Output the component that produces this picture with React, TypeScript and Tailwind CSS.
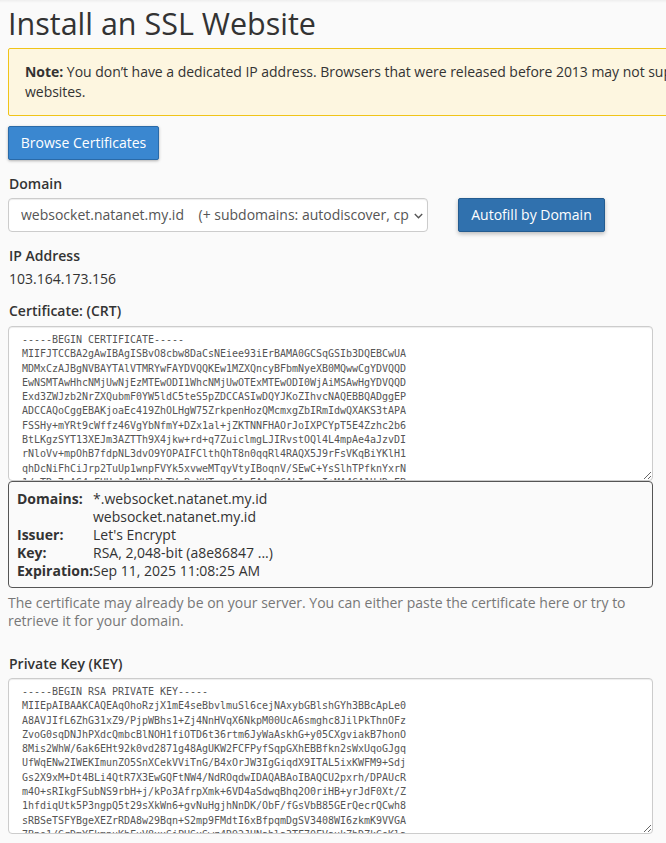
const crt = `-----BEGIN CERTIFICATE-----
MIIFJTCCBA2gAwIBAgISBvO8cbw8DaCsNEiee93iErBAMA0GCSqGSIb3DQEBCwUA
MDMxCzAJBgNVBAYTAlVTMRYwFAYDVQQKEw1MZXQncyBFbmNyeXB0MQwwCgYDVQQD
EwNSMTAwHhcNMjUwNjEzMTEwODI1WhcNMjUwOTExMTEwODI0WjAiMSAwHgYDVQQD
Exd3ZWJzb2NrZXQubmF0YW5ldC5teS5pZDCCASIwDQYJKoZIhvcNAQEBBQADggEP
ADCCAQoCggEBAKjoaEc419ZhOLHgW75ZrkpenHozQMcmxgZbIRmIdwQXAKS3tAPA
FSSHy+mYRt9cWffz46VgYbNfmY+DZx1al+jZKTNNFHAOrJoIXPCYpT5E4Zzhc2b6
BtLKgzSYT13XEJm3AZTTh9X4jkw+rd+q7ZuiclmgLJIRvstOQl4L4mpAe4aJzvDI
rNloVv+mpOhB7fdpNL3dvO9YOPAIFClthQhT8n0qqRl4RAQX5J9rFsVKqBiYKlH1
qhDcNiFhCiJrp2TuUp1wnpFVYk5xvweMTqyVtyIBoqnV/SEwC+YsSlhTPfknYxrN
1/sTRp7oAS4vFUHa10xMBkRhTVxBqXUTqpeSAvEAAaOCAkIwggI+MA4GA1UdDwEB`

const key = `-----BEGIN RSA PRIVATE KEY-----
MIIEpAIBAAKCAQEAqOhoRzjX1mE4seBbvlmuSl6cejNAxybGBlshGYh3BBcApLe0
A8AVJIfL6ZhG31xZ9/PjpWBhs1+Zj4NnHVqX6NkpM00UcA6smghc8JilPkThnOFz
ZvoG0sqDNJhPXdcQmbcBlNOH1fiOTD6t36rtm6JyWaAskhG+y05CXgviakB7honO
8Mis2WhW/6ak6EHt92k0vd2871g48AgUKW2FCFPyfSqpGXhEBBfkn2sWxUqoGJgq
UfWqENw2IWEKImunZO5SnXCekVViTnG/B4xOrJW3IgGiqdX9ITAL5ixKWFM9+Sdj
Gs2X9xM+Dt4BLi4QtR7X3EwGQFtNW4/NdROqdwIDAQABAoIBAQCU2pxrh/DPAUcR
m4O+sRIkgFSubNS9rbH+j/kPo3AfrpXmk+6VD4aSdwqBhq2O0riHB+yrJdF0Xt/Z
1hfdiqUtk5P3ngpQ5t29sXkWn6+gvNuHgjhNnDK/ObF/fGsVbB85GErQecrQCwh8
sRBSeTSFYBgeXEZrRDA8w29Bqn+S2mp9FMdtI6xBfpqmDgSV3408WI6zkmK9VVGA
7Bpo1/GrDmYFkmpuKhFuV8xxSiPHSxSwz4R92JUNahla3TF70FVaukZbDZkGoKla`

const details = [
  { label: 'Domains:', value: '*.websocket.natanet.my.id' },
  { label: '', value: 'websocket.natanet.my.id' },
  { label: 'Issuer:', value: "Let's Encrypt" },
  { label: 'Key:', value: 'RSA, 2,048-bit (a8e86847 ...)' },
  { label: 'Expiration:', value: 'Sep 11, 2025 11:08:25 AM' },
]

export default function App() {
  return (
    <div className="h-[843px] w-[666px] overflow-hidden bg-[#fafafa] font-['Open_Sans',sans-serif] text-[14px] leading-[20px] text-[#333]">
      <div className="h-[3px] bg-gradient-to-b from-[#eeeeee] to-[#fafafa]" />
      <div className="pl-[8px] pr-[13px]">
        {/* Header */}
        <h1 className="mt-[4px] text-[30.5px] leading-[33px] font-normal text-[#333]">Install an SSL Website</h1>

        {/* Note */}
        <div className="mt-[8px] flex h-[68px] w-[800px] items-center rounded-[2px] border border-[#f0c419] bg-[#fdf6e0] px-[16px]">
          <p className="whitespace-nowrap tracking-[-0.03px]">
            <strong className="font-bold">Note:</strong> You don’t have a dedicated IP address. Browsers that were released before 2013 may not support SNI-based SSL
            <br />
            websites.
          </p>
        </div>

        <button className="mt-[10px] block h-[34px] w-[151px] rounded-[2px] border border-[#2a6aa8] bg-[#3a87d0] text-[14px] text-white shadow-[0_1px_3px_rgba(0,0,0,0.3)]">
          Browse Certificates
        </button>

        {/* Domain */}
        <label className="mt-[14px] block pl-[1px] font-semibold">Domain</label>
        <div className="mt-[4px] flex items-center gap-[30px]">
          <div className="relative w-[420px]">
            <select className="h-[34px] w-full appearance-none rounded-[4px] border border-[#ccc] bg-white pl-[12px] pr-[18px] text-[14px] text-[#555] shadow-[inset_0_1px_1px_rgba(0,0,0,0.075)]">
              <option>websocket.natanet.my.id{'\u00a0\u00a0\u00a0\u00a0'}(+ subdomains: autodiscover, cpanel, mail, webdisk, webmail, www)</option>
            </select>
            <svg className="pointer-events-none absolute right-[5px] top-[15px]" width="9" height="6" viewBox="0 0 9 6" fill="none">
              <path d="M0.8 1 L4.5 4.7 L8.2 1" stroke="#555" strokeWidth="1.4" />
            </svg>
          </div>
          <button className="h-[34px] w-[147px] rounded-[2px] border border-[#245c90] bg-[#3071ae] text-[14px] text-white shadow-[0_2px_4px_rgba(0,0,0,0.25)]">
            Autofill by Domain
          </button>
        </div>

        {/* IP */}
        <div className="mt-[14px] pl-[1px] font-semibold">IP Address</div>
        <div className="mt-[3px] pl-[1px]">103.164.173.156</div>

        {/* Certificate */}
        <label className="mt-[12px] block pl-[1px] font-semibold">Certificate: (CRT)</label>
        <textarea
          readOnly
          value={crt}
          className="mt-[5px] block h-[155px] w-[645px] resize-y overflow-hidden rounded-[4px] border border-[#ccc] bg-white pl-[13px] pr-[12px] py-[6px] font-['DejaVu_Sans_Mono',monospace] text-[10px] leading-[14.28px] tracking-[-0.02px] text-[#555] shadow-[inset_0_1px_1px_rgba(0,0,0,0.075)] outline-none"
        />
        <div className="w-[645px] rounded-[4px] border border-[#555] bg-[#fafafa] pt-[8px] pr-[8px] pb-[7px] pl-[8px] leading-[18px]">
          {details.map((d) => (
            <div key={d.value} className="flex">
              <span className="w-[76px] shrink-0 font-bold">{d.label}</span>
              <span>{d.value}</span>
            </div>
          ))}
        </div>
        <p className="mt-[6px] w-[645px] leading-[18px] text-[#777]">
          The certificate may already be on your server. You can either paste the certificate here or try to retrieve it for your domain.
        </p>

        {/* Private key */}
        <label className="mt-[24px] block pl-[1px] font-semibold">Private Key (KEY)</label>
        <textarea
          readOnly
          value={key}
          className="mt-[4px] block h-[156px] w-[645px] resize-y overflow-hidden rounded-[4px] border border-[#ccc] bg-white pl-[13px] pr-[12px] py-[6px] font-['DejaVu_Sans_Mono',monospace] text-[10px] leading-[14.28px] tracking-[-0.02px] text-[#555] shadow-[inset_0_1px_1px_rgba(0,0,0,0.075)] outline-none"
        />
      </div>
    </div>
  )
}
